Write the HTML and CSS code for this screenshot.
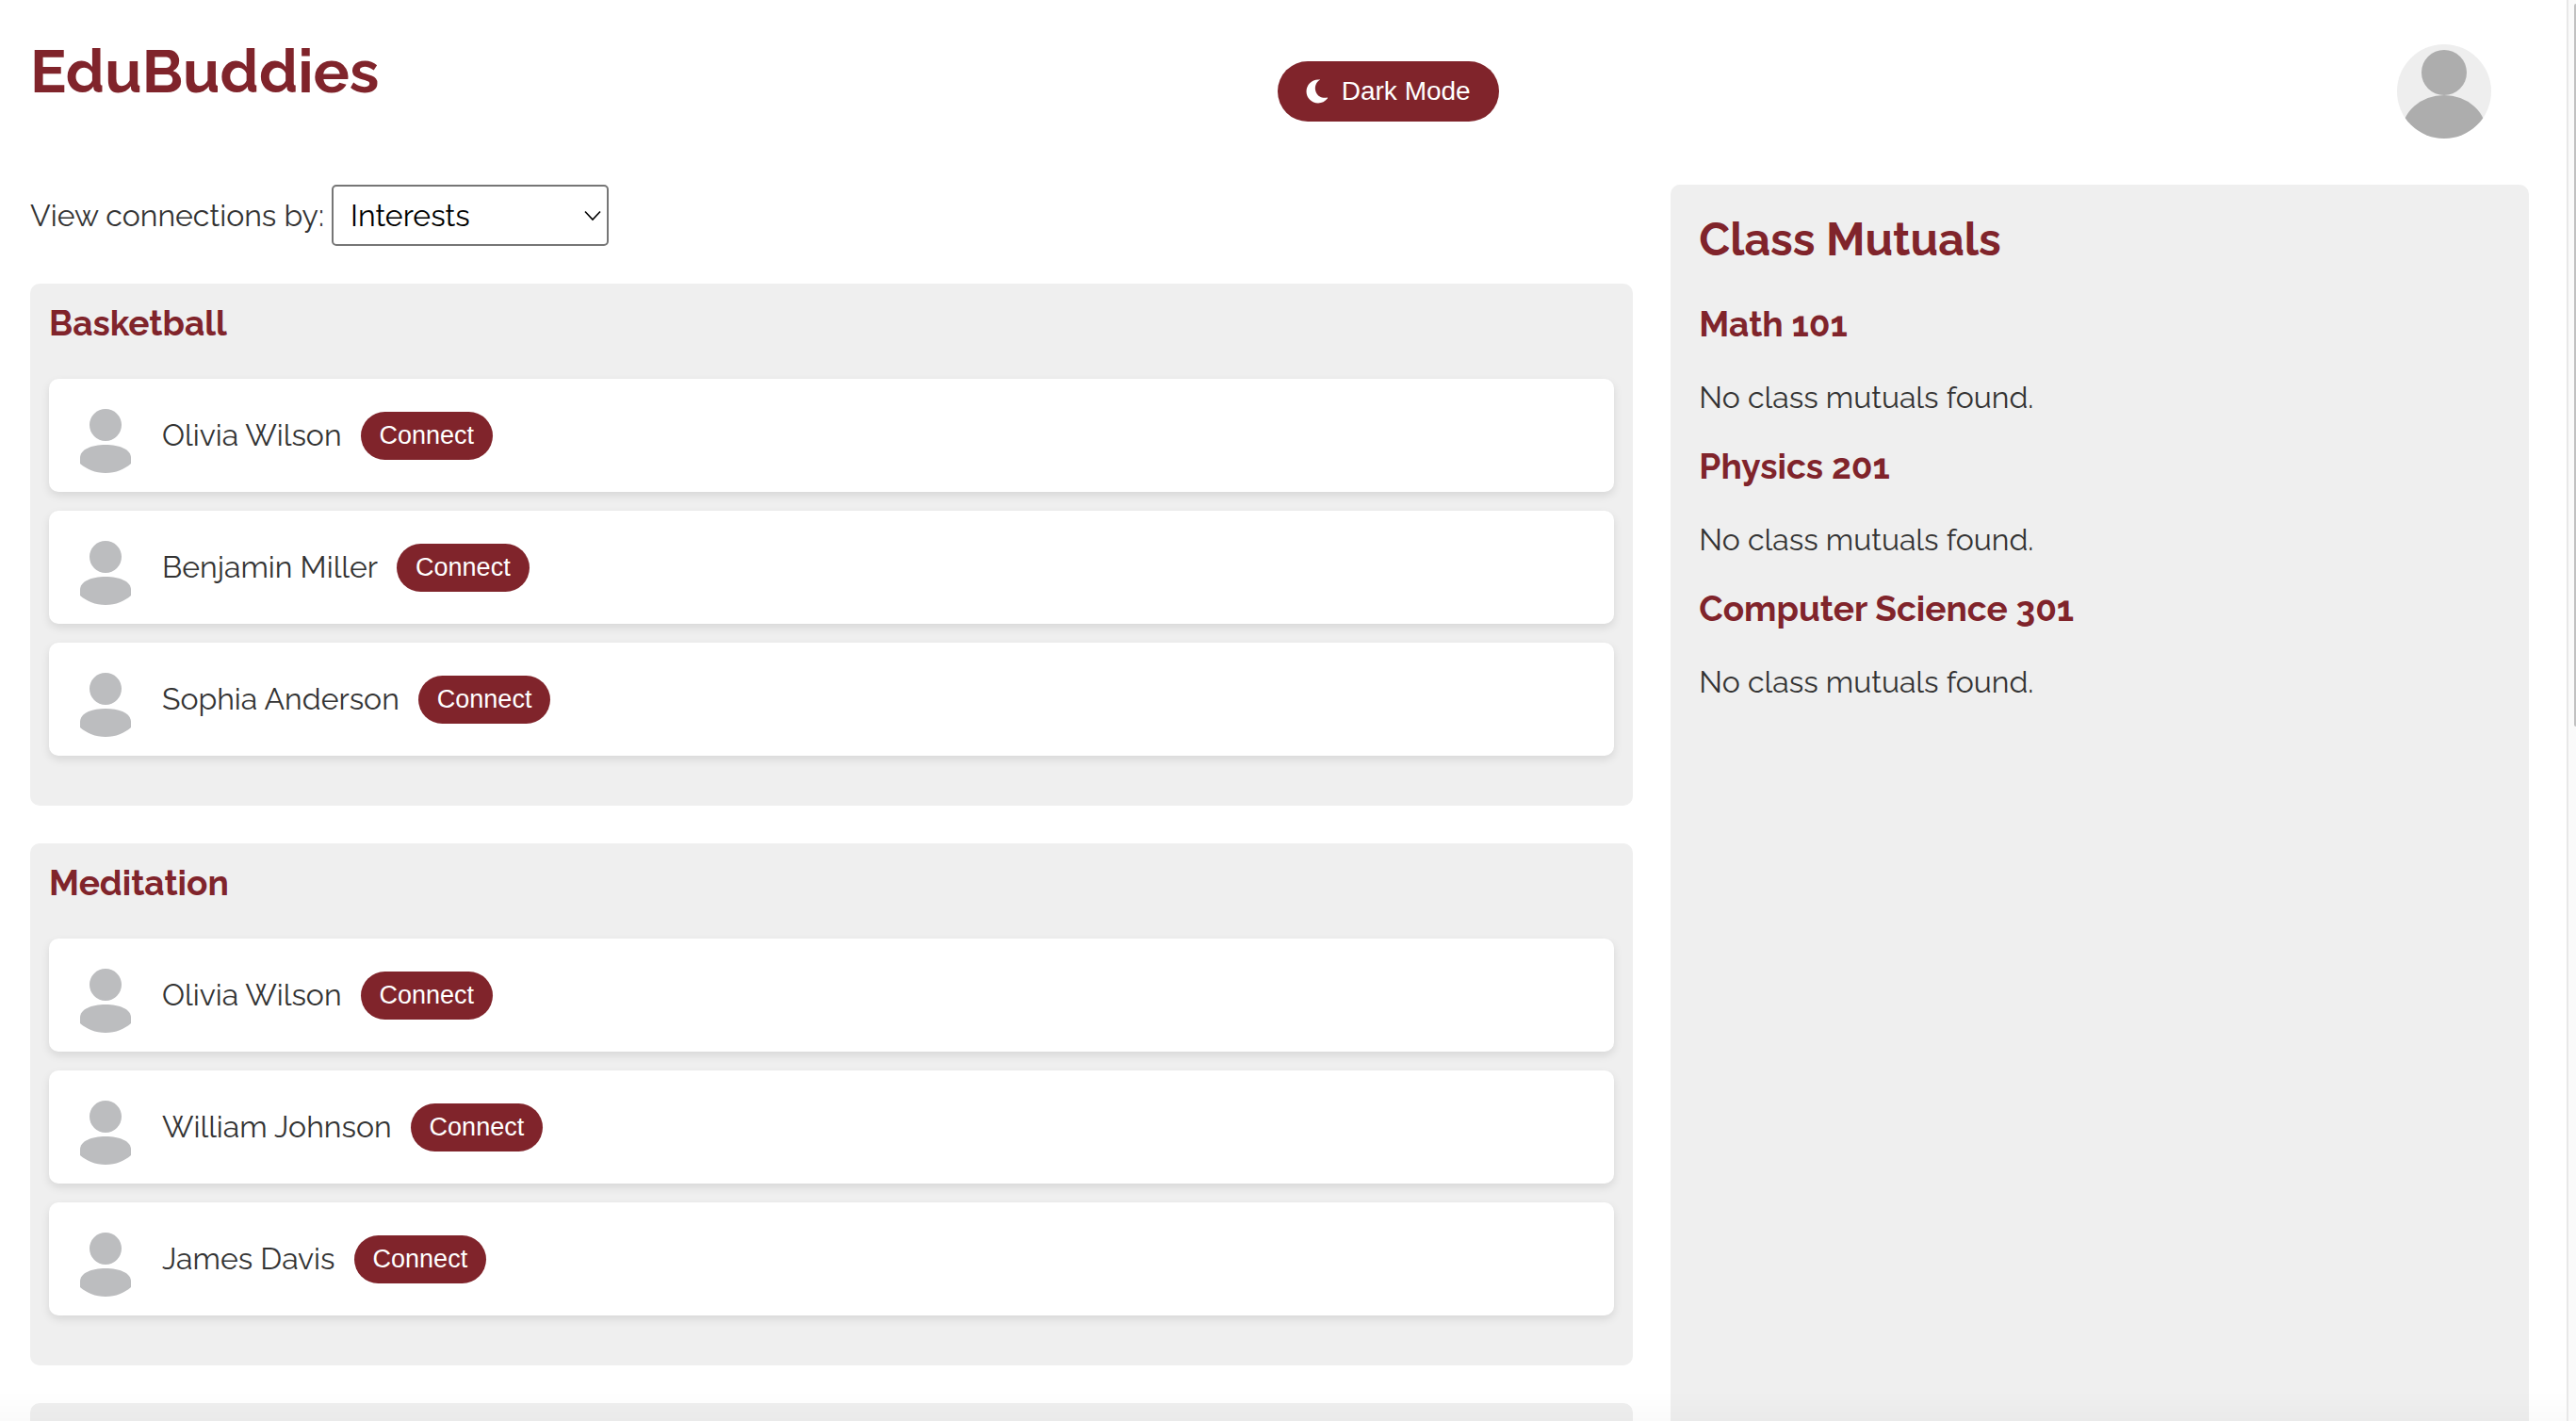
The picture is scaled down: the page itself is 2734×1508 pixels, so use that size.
FILE: index.html
```html
<!DOCTYPE html>
<html lang="en">
<head>
  <meta charset="UTF-8">
  <meta name="viewport" content="width=device-width, initial-scale=1.0">
  <title>EduBuddies</title>
  <link rel="stylesheet" href="styles.css">
</head>
<body>
  <svg class="symbols" aria-hidden="true">
    <symbol id="person" viewBox="0 0 80 80">
      <circle cx="40" cy="29" r="17"/>
      <path d="M13 64 C13 55 25 50 40 50 C55 50 67 55 67 64 V70 C60 76 51 80 40 80 C29 80 20 76 13 70 Z"/>
    </symbol>
  </svg>

  <header class="header">
    <h1 class="logo">EduBuddies</h1>
    <button class="dark-mode-toggle" type="button">
      <svg class="moon" viewBox="0 0 24 26" aria-hidden="true">
        <path d="M15 0.6 C10.5 3.4 8.8 8.6 10.6 13.4 C12.5 18.4 17.4 20.6 22.4 19.6 C23 19.5 23.3 20 22.9 20.5 C20.4 23.7 16.9 25.4 13 25.4 C6 25.4 0.5 20 0.5 13 C0.5 6 6 0.5 13 0.4 C13.5 0.4 14.1 0.4 14.8 0.2 Z"/>
      </svg>
      Dark Mode
    </button>
    <svg class="profile-pic" viewBox="0 0 100 100" role="img" aria-label="Profile">
      <clipPath id="round"><circle cx="50" cy="50" r="50"/></clipPath>
      <g clip-path="url(#round)">
        <rect class="profile-bg" width="100" height="100"/>
        <circle class="profile-fg" cx="50" cy="30" r="24"/>
        <ellipse class="profile-fg" cx="50" cy="94" rx="45" ry="40"/>
      </g>
    </svg>
  </header>

  <div class="container">
    <main class="connections">
      <div class="filter">
        <label for="view">View connections by:</label>
        <select id="view">
          <option>Interests</option>
          <option>Classes</option>
        </select>
      </div>

      <section class="group">
        <h3>Basketball</h3>
        <div class="card">
          <svg class="avatar"><use href="#person"/></svg>
          <span>Olivia Wilson</span>
          <button class="connect" type="button">Connect</button>
        </div>
        <div class="card">
          <svg class="avatar"><use href="#person"/></svg>
          <span>Benjamin Miller</span>
          <button class="connect" type="button">Connect</button>
        </div>
        <div class="card">
          <svg class="avatar"><use href="#person"/></svg>
          <span>Sophia Anderson</span>
          <button class="connect" type="button">Connect</button>
        </div>
      </section>

      <section class="group">
        <h3>Meditation</h3>
        <div class="card">
          <svg class="avatar"><use href="#person"/></svg>
          <span>Olivia Wilson</span>
          <button class="connect" type="button">Connect</button>
        </div>
        <div class="card">
          <svg class="avatar"><use href="#person"/></svg>
          <span>William Johnson</span>
          <button class="connect" type="button">Connect</button>
        </div>
        <div class="card">
          <svg class="avatar"><use href="#person"/></svg>
          <span>James Davis</span>
          <button class="connect" type="button">Connect</button>
        </div>
      </section>

      <section class="group"></section>
    </main>

    <aside class="mutuals">
      <h2>Class Mutuals</h2>
      <h3>Math 101</h3>
      <p>No class mutuals found.</p>
      <h3>Physics 201</h3>
      <p>No class mutuals found.</p>
      <h3>Computer Science 301</h3>
      <p>No class mutuals found.</p>
    </aside>
  </div>

  <div class="bottom-fade"></div>
  <div class="scrollbar"><div class="thumb"></div></div>
</body>
</html>
```

FILE: styles.css
```css
* {
  box-sizing: border-box;
}
body {
  font-family: Raleway, Lato, sans-serif;
  font-size: 32px;
  line-height: 40px;
  color: #333;
  background-color: #fff;
  margin: 0;
  height: 100vh;
  overflow: hidden;
}
h1, h2, h3 {
  color: #80242b;
  font-weight: bold;
  margin: 0;
}
h2 {
  font-size: 48px;
  line-height: 56px;
}
h3 {
  font-size: 37px;
  line-height: 44px;
}
p {
  margin: 0;
}
button {
  font-family: "Liberation Sans", Arial, sans-serif;
  color: #fff;
  background-color: #80242b;
  border: none;
  border-radius: 40px;
  cursor: pointer;
}
.symbols {
  display: none;
}

.header {
  display: flex;
  justify-content: space-between;
  align-items: center;
  padding: 47px 90px 49px 32px;
}
.logo {
  font-size: 64px;
  line-height: 56px;
  margin-bottom: 43px;
}
.dark-mode-toggle {
  display: flex;
  align-items: center;
  gap: 14px;
  font-size: 28px;
  line-height: 32px;
  padding: 16px 30px;
}
.moon {
  width: 24px;
  height: 26px;
  fill: #fff;
}
.profile-pic {
  width: 100px;
  height: 100px;
}
.profile-bg {
  fill: #eee;
}
.profile-fg {
  fill: #adadad;
}

.container {
  display: flex;
  gap: 40px;
  padding: 0 50px 0 32px;
}
.connections {
  flex: 2;
}
.filter {
  display: flex;
  align-items: center;
  gap: 8px;
  margin-bottom: 40px;
}
.filter select {
  font-family: inherit;
  font-size: 32px;
  color: #000;
  width: 294px;
  height: 65px;
  padding: 0 56px 0 18px;
  border: 2px solid #767676;
  border-radius: 5px;
  appearance: none;
  background: #fff url("data:image/svg+xml,%3Csvg xmlns='http://www.w3.org/2000/svg' width='18' height='12' fill='none' stroke='black' stroke-width='1.6'%3E%3Cpath d='M1 1.5 L9 10 L17 1.5'/%3E%3C/svg%3E") no-repeat right 6px center;
}
.group {
  background-color: #efefef;
  border-radius: 10px;
  padding: 20px 20px 33px;
  margin-bottom: 40px;
}
.group h3 {
  margin-bottom: 37px;
}
.card {
  display: flex;
  align-items: center;
  gap: 20px;
  height: 120px;
  padding: 20px;
  margin-bottom: 20px;
  background-color: #fff;
  border-radius: 10px;
  box-shadow: 0 4px 10px rgba(0, 0, 0, 0.1);
}
.avatar {
  width: 80px;
  height: 80px;
  fill: #bcbdbf;
}
.connect {
  font-size: 27px;
  line-height: 31px;
  padding: 10px 20px;
}

.mutuals {
  flex: 1;
  background-color: #efefef;
  border-radius: 10px;
  padding: 30px;
}
.mutuals h2 {
  margin-bottom: 40px;
}
.mutuals h3 {
  margin-bottom: 36px;
}
.mutuals p {
  margin-bottom: 31px;
}

/* lies over the lower edge of the page */
.bottom-fade {
  position: fixed;
  left: 0;
  right: 0;
  bottom: 0;
  height: 32px;
  background: linear-gradient(rgba(0, 0, 0, 0), rgba(0, 0, 0, 0.02));
}
.scrollbar {
  position: fixed;
  top: 0;
  right: 0;
  bottom: 0;
  width: 10px;
  padding: 4px 0 0 6px;
  background-color: #fafafa;
  border-left: 2px solid #e8e8e8;
}
.thumb {
  height: 51%;
  background-color: #c1c1c1;
  border-radius: 2px 0 0 2px;
}
```
